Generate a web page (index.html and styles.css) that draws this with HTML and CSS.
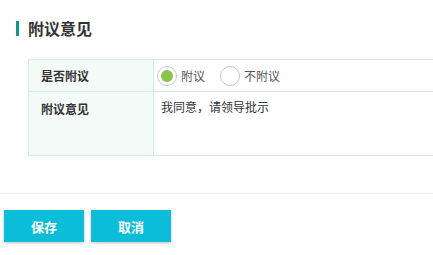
FILE: index.html
```html
<!DOCTYPE html>
<html lang="zh-CN">
<head>
<meta charset="utf-8">
<link rel="stylesheet" href="styles.css">
</head>
<body>
<div class="page">
  <h2 class="title"><span class="title-bar"></span>附议意见</h2>
  <div class="form-table">
    <div class="row row-radio">
      <div class="label">是否附议</div>
      <div class="value">
        <label class="radio checked"><span class="dot"></span>附议</label>
        <label class="radio"><span class="dot"></span>不附议</label>
      </div>
    </div>
    <div class="row row-text">
      <div class="label label-top">附议意见</div>
      <div class="value value-text">我同意，请领导批示</div>
    </div>
  </div>
  <div class="divider"></div>
  <div class="actions">
    <button class="btn">保存</button>
    <button class="btn">取消</button>
  </div>
</div>
</body>
</html>
```
FILE: styles.css
```css
html, body {
  margin: 0;
  padding: 0;
  background: #fff;
  overflow: hidden;
}
body {
  font-family: "Noto Sans CJK SC", "Noto Sans", sans-serif;
  color: #333;
  font-size: 12px;
}
.page {
  width: 433px;
  height: 255px;
}
.title {
  margin: 0;
  padding: 17px 0 0 16px;
  height: 22px;
  display: flex;
  align-items: center;
  font-size: 16px;
  font-weight: bold;
  color: #333;
  line-height: 22px;
}
.title-bar {
  width: 3px;
  height: 15px;
  background: #12968a;
  margin-right: 9px;
}
.form-table {
  margin: 20px 0 0 28px;
  width: 405px;
  border-top: 1px solid #d5ede5;
}
.row {
  display: flex;
  border-bottom: 1px solid #d5ede5;
}
.row-radio {
  height: 31px;
}
.row-text {
  height: 63px;
}
.label {
  width: 112px;
  flex: none;
  background: #f3faf8;
  border-left: 1px solid #d5ede5;
  border-right: 1px solid #d5ede5;
  padding-left: 12px;
  font-weight: bold;
  color: #333;
  display: flex;
  align-items: center;
}
.label-top {
  align-items: flex-start;
  padding-top: 8px;
}
.value {
  flex: 1;
  display: flex;
  align-items: center;
  padding-left: 3px;
  gap: 15px;
}
.value-text {
  align-items: flex-start;
  padding-left: 7px;
  padding-top: 6px;
  color: #333;
}
.radio {
  display: flex;
  align-items: center;
  color: #555;
}
.dot {
  width: 20px;
  height: 20px;
  border: 1px solid #c8c8c8;
  border-radius: 50%;
  box-sizing: border-box;
  margin-right: 4px;
  position: relative;
  background: #fff;
}
.radio.checked .dot::after {
  content: "";
  position: absolute;
  left: 3px;
  top: 3px;
  width: 12px;
  height: 12px;
  border-radius: 50%;
  background: #8bc34a;
}
.divider {
  margin-top: 37px;
  border-top: 1px solid #eeeeee;
}
.actions {
  display: flex;
  gap: 7px;
  padding: 16px 0 0 4px;
}
.btn {
  width: 80px;
  height: 32px;
  border: none;
  background: #0bbdd9;
  color: #fff;
  font-family: "Noto Sans CJK SC", "Noto Sans", sans-serif;
  font-size: 13px;
  font-weight: bold;
  box-shadow: 0 1px 3px rgba(0,0,0,0.25);
  padding: 0;
}
```
